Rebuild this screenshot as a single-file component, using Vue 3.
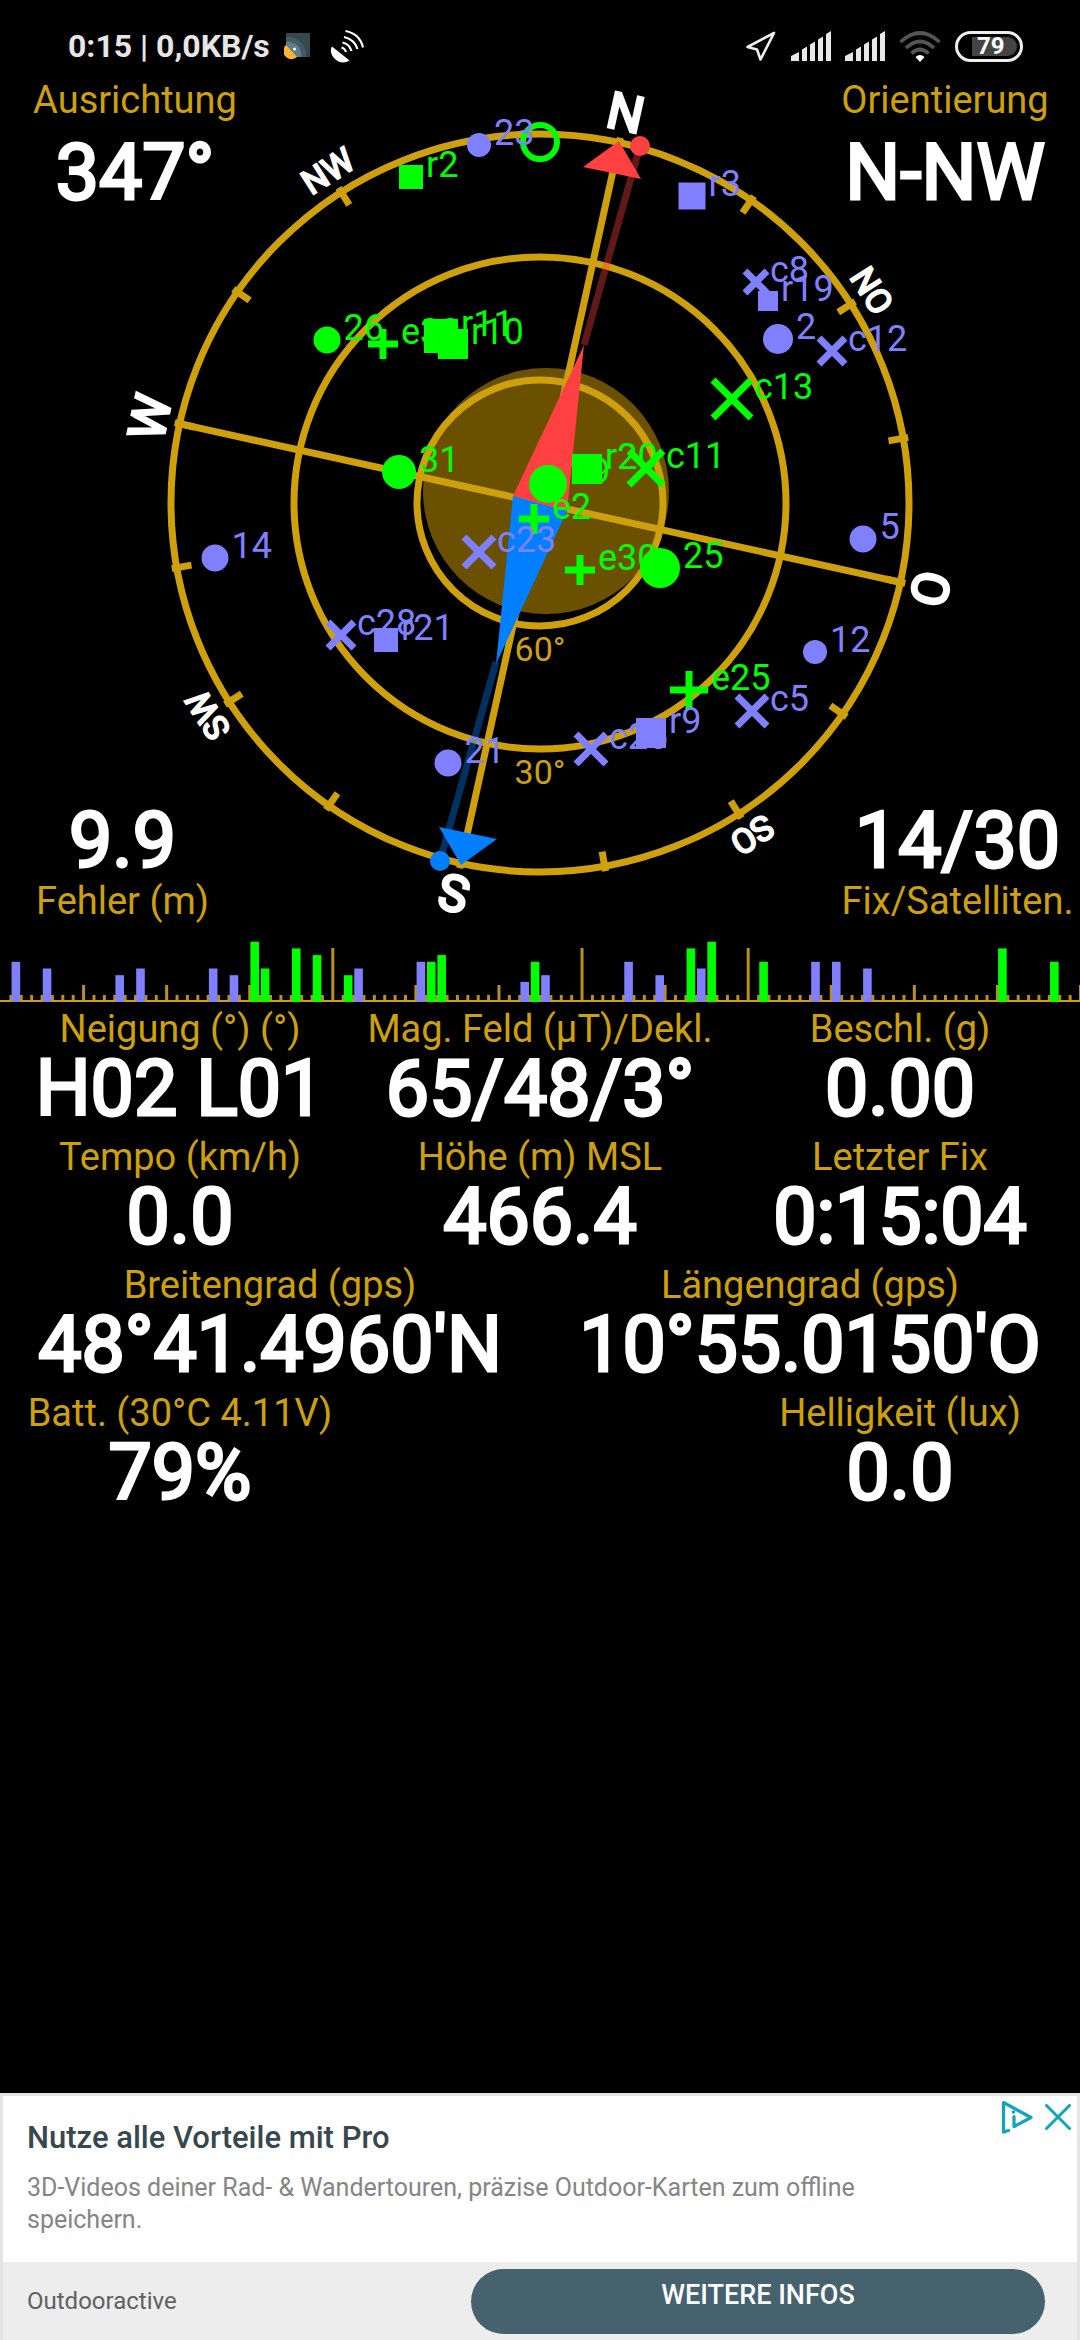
<template>
  <div class="screen">
    <header class="status-bar">
      <div class="status-left">
        <span class="clock">0:15 | 0,0KB/s</span>
        <svg class="icon-radar" viewBox="0 0 26 28" aria-hidden="true">
          <rect x="2" y="1" width="24" height="24" fill="#37474f" />
          <path d="M2 5a18 18 0 0 1 20 20H2z" fill="#455a64" />
          <path d="M2 10a13 13 0 0 1 15 15H2z" fill="#607d8b" />
          <path d="M2 13L13 25A8 8 0 0 1 2 13z" fill="#ffb52e" />
          <circle cx="10.500" cy="17" r="1.500" fill="#fff" />
        </svg>
        <svg class="icon-dish" viewBox="0 0 34 34" aria-hidden="true">
          <path d="M2 17.500L19.500 31.500C15 34.500 8.500 34 4.500 29.500S0 20.500 2 17.500z" fill="#fff" />
          <g fill="none" stroke="#fff" stroke-width="2.200">
            <path d="M11.500 18.500q3.500 1 4.500 4.500" />
            <path d="M12.500 13.500q7 1.500 9 8.500" />
            <path d="M14 8q10.500 2.500 13.500 12" />
            <path d="M15.500 2q14.500 3 17.500 16.500" />
          </g>
        </svg>
      </div>
      <div class="status-right">
        <svg class="icon-arrow" viewBox="0 0 32 32" aria-hidden="true">
          <path d="M29 3L2.500 17l9.500 2.500L15.500 29.500z" fill="none" stroke="#eee" stroke-width="2.600" stroke-linejoin="round" />
        </svg>
        <svg v-for="n in 2" :key="n" class="icon-signal" viewBox="0 0 40 30" aria-hidden="true">
          <path d="M0 30v-5l8-4v9zM11 30V18.500l5-3V30zM19 30V13.500l5-3V30zM27 30V8.500l5-3V30zM35 30V3l5-3v30z" fill="#e8e8e8" />
        </svg>
        <svg class="icon-wifi" viewBox="0 0 42 32" aria-hidden="true">
          <g fill="none" stroke="#555" stroke-width="3.600">
            <path d="M1.500 12q19.500-18 39 0" />
            <path d="M7 18q14-13 28 0" />
            <path d="M12.500 23.500q8.500-8 17 0" />
          </g>
          <path d="M16.500 27q4.500-4 9 0L21 32z" fill="#fff" />
        </svg>
        <span class="battery"><span class="battery-level">79</span></span>
      </div>
    </header>

    <section class="compass">
      <svg class="dial" viewBox="0 78 1080 845" role="img" aria-label="Kompass">
        <circle cx="546" cy="491" r="123" fill="#6b5000" />
        <g transform="translate(540 503)">
          <g class="gold-line">
            <circle r="369" />
            <circle r="246" />
            <circle r="123" />
          </g>
          <g :transform="`rotate(${north})`">
            <g class="gold-line">
              <path d="M0-373V373M-373 0H373" />
              <path v-for="a in ticks" :key="a" d="M0-374V-354" :transform="`rotate(${a})`" />
            </g>
            <text
              v-for="(d, i) in directions"
              :key="d"
              y="-382"
              :class="['direction', { small: d.length > 1 }]"
              :transform="`rotate(${i * 45})`"
            >{{ d }}</text>
          </g>
          <text class="ring-label" y="158">60°</text>
          <text class="ring-label" y="281">30°</text>
        </g>

        <!-- needle -->
        <path d="M584 345L640 146" stroke="#ff4040" stroke-opacity=".38" stroke-width="7" />
        <path d="M496 662L440 861" stroke="#0080ff" stroke-opacity=".38" stroke-width="7" />
        <path d="M513 496L584 345L567 511z" fill="#ff4040" />
        <path d="M513 496L496 664L567 511z" fill="#0080ff" />
        <circle cx="640" cy="146" r="10" fill="#ff4040" />
        <circle cx="440" cy="861" r="10" fill="#0080ff" />
        <path d="M619 141L583 167L641 179z" fill="#ff4040" />
        <path d="M461 865L439 827L497 839z" fill="#0080ff" />

        <circle cx="540" cy="142" r="17" fill="none" stroke="#00ff00" stroke-width="6" />
        <g
          v-for="s in satellites"
          :key="s.id"
          :class="s.fix ? 'fix' : 'nofix'"
          :transform="`translate(${s.x} ${s.y})`"
        >
          <circle v-if="s.kind === 'dot'" :r="s.r" />
          <rect v-else-if="s.kind === 'box'" :x="-s.r" :y="-s.r" :width="s.r * 2" :height="s.r * 2" />
          <path v-else-if="s.kind === 'plus'" class="mark" :d="`M${-s.r} 0H${s.r}M0 ${-s.r}V${s.r}`" />
          <path v-else class="mark" :d="`M${2 - s.r} ${2 - s.r}L${s.r - 2} ${s.r - 2}M${2 - s.r} ${s.r - 2}L${s.r - 2} ${2 - s.r}`" />
          <text :x="s.r + (s.kind === 'cross' ? 1 : 3)">{{ s.id }}</text>
        </g>
      </svg>

      <div class="corners">
        <div v-for="c in corners" :key="c.label" :class="['corner', c.place]">
          <div class="label">{{ c.label }}</div>
          <div class="value">{{ c.value }}</div>
        </div>
      </div>
    </section>

    <svg class="strip" viewBox="0 0 1080 64" role="img" aria-label="Satellitensignale">
      <rect
        v-for="n in 104"
        :key="n"
        :x="n * slot - 1"
        :y="62 - tickHeight(n)"
        width="3"
        :height="tickHeight(n)"
        fill="#b8901c"
      />
      <rect x="0" y="61" width="1080" height="2" fill="#cda00c" />
      <rect
        v-for="b in bars"
        :key="'b' + b[0]"
        :x="(b[0] + 0.5) * slot - 4"
        :y="63 - b[1] * 6.7"
        width="8.600"
        :height="b[1] * 6.7"
        :class="b[2] ? 'fix' : 'nofix'"
      />
    </svg>

    <main class="readings">
      <div v-for="(row, i) in readings" :key="i" class="row">
        <div v-for="(cell, j) in row" :key="j" class="cell">
          <template v-if="cell">
            <div class="label">{{ cell.label }}</div>
            <div class="value">{{ cell.value }}</div>
          </template>
        </div>
      </div>
    </main>

    <aside class="ad">
      <div class="ad-body">
        <div class="ad-text">
          <h2>Nutze alle Vorteile mit Pro</h2>
          <p>3D-Videos deiner Rad- &amp; Wandertouren, präzise Outdoor-Karten zum offline speichern.</p>
        </div>
        <div class="ad-controls">
          <button type="button" aria-label="AdChoices">
            <svg class="icon-choices" viewBox="0 0 32 34" aria-hidden="true">
              <g fill="none" stroke="#10a5b8" stroke-width="3.200" stroke-linejoin="round" stroke-linecap="round">
                <path d="M7.500 30.500L2.500 32V2.500L30 17.500L13 26.500V16.500" />
              </g>
              <circle cx="12.500" cy="12" r="1.800" fill="#10a5b8" />
            </svg>
          </button>
          <button type="button" aria-label="Schließen">
            <svg class="icon-close" viewBox="0 0 26 26" aria-hidden="true">
              <path d="M1.500 1.500l23 23M24.500 1.500l-23 23" stroke="#10a5b8" stroke-width="3" stroke-linecap="round" />
            </svg>
          </button>
        </div>
      </div>
      <div class="ad-footer">
        <span class="brand">Outdooractive</span>
        <button type="button" class="cta">WEITERE INFOS</button>
      </div>
    </aside>
  </div>
</template>

<script setup>
const north = 12.4
const slot = 1080 / 104

const directions = ['N', 'NO', 'O', 'SO', 'S', 'SW', 'W', 'NW']
const ticks = Array.from({ length: 16 }, (_, i) => i * 22.5)

const sat = (id, kind, x, y, r, fix) => ({ id, kind, x, y, r, fix })

// later entries are painted over earlier ones
const satellites = [
  sat('23', 'dot', 479, 145, 12, false),
  sat('2', 'dot', 778, 339, 15, false),
  sat('5', 'dot', 863, 539, 13.5, false),
  sat('12', 'dot', 815, 652, 12, false),
  sat('14', 'dot', 215, 558, 13.5, false),
  sat('21', 'dot', 448, 763, 13.5, false),
  sat('26', 'dot', 327, 340, 13.5, true),
  sat('31', 'dot', 399, 472, 17, true),
  sat('29', 'dot', 548, 484, 19, true),
  sat('e33', 'plus', 383, 344, 15, true),
  sat('e2', 'plus', 534, 519, 15, true),
  sat('e30', 'plus', 580, 570, 15, true),
  sat('e25', 'plus', 689, 690, 19, true),
  sat('25', 'dot', 660, 568, 20, true),
  sat('c8', 'cross', 756, 282, 13, false),
  sat('c12', 'cross', 832, 351, 15, false),
  sat('c13', 'cross', 732, 399, 21, true),
  sat('c23', 'cross', 479, 552, 17, false),
  sat('c28', 'cross', 341, 635, 15, false),
  sat('c26', 'cross', 591, 749, 17, false),
  sat('c5', 'cross', 752, 711, 17, false),
  sat('r2', 'box', 411, 177, 12, true),
  sat('r3', 'box', 692, 196, 13.5, false),
  sat('r19', 'box', 768, 301, 10, false),
  sat('r11', 'box', 441, 336, 17, true),
  sat('r10', 'box', 453, 344, 15, true),
  sat('r20', 'box', 587, 469, 15, true),
  sat('c11', 'cross', 646, 468, 19, true),
  sat('r21', 'box', 386, 640, 12, false),
  sat('r9', 'box', 651, 733, 15, false)
]

// [slot, strength, used in fix]
const bars = [
  [1, 6, 0], [4, 5, 0], [11, 4, 0], [13, 5, 0], [20, 5, 0], [22, 4, 0],
  [24, 9, 1], [25, 5, 1], [28, 8, 1], [30, 7, 1], [33, 4, 1], [34, 5, 0],
  [40, 6, 0], [41, 6, 1], [42, 7, 1], [50, 3, 0], [51, 6, 1], [52, 4, 0],
  [60, 6, 0], [63, 4, 0], [66, 8, 1], [67, 5, 0], [68, 9, 1], [73, 6, 1],
  [78, 6, 0], [80, 6, 0], [83, 5, 0], [96, 8, 1], [101, 6, 1]
]

const tickHeight = (n) => {
  if ([32, 56, 72].includes(n)) return 53
  return n % 8 === 0 ? 16 : 6
}

const corners = [
  { label: 'Ausrichtung', value: '347°', place: 'top' },
  { label: 'Orientierung', value: 'N-NW', place: 'top end' },
  { label: 'Fehler (m)', value: '9.9', place: 'bottom' },
  { label: 'Fix/Satelliten.', value: '14/30', place: 'bottom end' }
]

const readings = [
  [
    { label: 'Neigung (°) (°)', value: 'H02 L01' },
    { label: 'Mag. Feld (µT)/Dekl.', value: '65/48/3°' },
    { label: 'Beschl. (g)', value: '0.00' }
  ],
  [
    { label: 'Tempo (km/h)', value: '0.0' },
    { label: 'Höhe (m) MSL', value: '466.4' },
    { label: 'Letzter Fix', value: '0:15:04' }
  ],
  [
    { label: 'Breitengrad (gps)', value: "48°41.4960'N" },
    { label: 'Längengrad (gps)', value: "10°55.0150'O" }
  ],
  [
    { label: 'Batt. (30°C 4.11V)', value: '79%' },
    null,
    { label: 'Helligkeit (lux)', value: '0.0' }
  ]
]
</script>

<style>
body {
  background: #000;
}
</style>

<style scoped>
.screen {
  min-height: 100vh;
  display: flex;
  flex-direction: column;
  background: #000;
  color: #fff;
  font-family: Roboto, "Liberation Sans", sans-serif;
}

.status-bar {
  display: flex;
  justify-content: space-between;
  align-items: center;
  height: 78px;
  padding: 14px 57px 0 68px;
  box-sizing: border-box;
}

.status-left,
.status-right {
  display: flex;
  align-items: center;
}

.status-right {
  gap: 14px;
}

.clock {
  color: #e6e6e6;
  font-size: 32px;
  font-weight: 700;
  line-height: 32px;
}

.icon-radar {
  width: 26px;
  height: 28px;
  margin-left: 14px;
}

.icon-dish {
  width: 34px;
  height: 34px;
  margin-left: 20px;
}

.icon-arrow {
  width: 32px;
  height: 32px;
}

.icon-signal {
  width: 40px;
  height: 30px;
}

.icon-wifi {
  width: 42px;
  height: 32px;
}

.battery {
  display: flex;
  width: 68px;
  height: 31px;
  padding: 3px;
  box-sizing: border-box;
  border: 3px solid #eee;
  border-radius: 16px;
}

.battery-level {
  flex: 1;
  border-radius: 0 10px 10px 0;
  margin-left: 11px;
  background: #444;
  color: #fff;
  font-size: 24px;
  font-weight: 700;
  line-height: 19px;
  padding-left: 5px;
}

.compass {
  display: grid;
}

.dial {
  grid-area: 1 / 1;
  width: 100%;
  display: block;
}

.corners {
  grid-area: 1 / 1;
  display: grid;
  grid-template-columns: 1fr 1fr;
  align-content: space-between;
}

.corner {
  display: flex;
  flex-direction: column;
  width: 270px;
  text-align: center;
}

.corner.top {
  gap: 13px;
}

.corner.bottom {
  flex-direction: column-reverse;
  width: 245px;
}

.corner.end {
  justify-self: end;
}

.label {
  color: #cda00c;
  font-size: 38px;
  line-height: 44px;
  white-space: nowrap;
}

.value {
  font-size: 77px;
  line-height: 76px;
  white-space: nowrap;
  -webkit-text-stroke: 3px #fff;
}

.gold-line {
  fill: none;
  stroke: #cda00c;
  stroke-width: 7px;
}

.direction {
  fill: #fff;
  stroke: #fff;
  stroke-width: 3px;
  font-size: 50px;
  text-anchor: middle;
}

.direction.small {
  stroke-width: 2px;
  font-size: 34px;
}

.ring-label {
  fill: #cda00c;
  font-size: 34px;
  text-anchor: middle;
}

.fix {
  fill: #00ff00;
}

.nofix {
  fill: #8080ff;
}

.fix text,
.nofix text {
  font-size: 36px;
}

.mark {
  fill: none;
  stroke-width: 7px;
}

.fix .mark {
  stroke: #00ff00;
}

.nofix .mark {
  stroke: #8080ff;
}

.strip {
  display: block;
  width: 100%;
  margin-top: 16px;
}

.readings {
  display: flex;
  flex-direction: column;
  gap: 8px;
  padding-top: 4px;
}

.row {
  display: flex;
}

.cell {
  flex: 1 1 0;
  min-width: 0;
  text-align: center;
}

.ad {
  margin-top: auto;
  border: 3px solid #e4e4e4;
  border-bottom: 0;
  background: #fff;
}

.ad-body {
  display: flex;
  justify-content: space-between;
  min-height: 166px;
}

.ad-text {
  max-width: 860px;
  padding: 24px 0 0 24px;
}

.ad-text h2 {
  margin: 0 0 16px;
  color: #37474f;
  font-size: 31px;
  font-weight: 500;
  line-height: 36px;
}

.ad-text p {
  margin: 0;
  color: #858585;
  font-size: 25px;
  line-height: 32px;
}

.ad-controls {
  display: flex;
  align-items: flex-start;
  gap: 12px;
  padding: 4px 6px 0 0;
}

.ad-controls button {
  display: flex;
  align-items: center;
  height: 34px;
  padding: 0;
  border: 0;
  background: none;
  cursor: pointer;
}

.icon-choices {
  width: 32px;
  height: 34px;
}

.icon-close {
  width: 26px;
  height: 26px;
}

.ad-footer {
  display: flex;
  align-items: center;
  justify-content: space-between;
  height: 78px;
  padding: 0 32px 0 24px;
  box-sizing: border-box;
  background: #ededed;
}

.brand {
  color: #616161;
  font-size: 24px;
}

.cta {
  flex: 0 1 574px;
  height: 65px;
  padding: 0 0 12px;
  border: 0;
  border-radius: 33px;
  background: #45626e;
  color: #fff;
  font-family: inherit;
  font-size: 27px;
  font-weight: 500;
  cursor: pointer;
}
</style>
